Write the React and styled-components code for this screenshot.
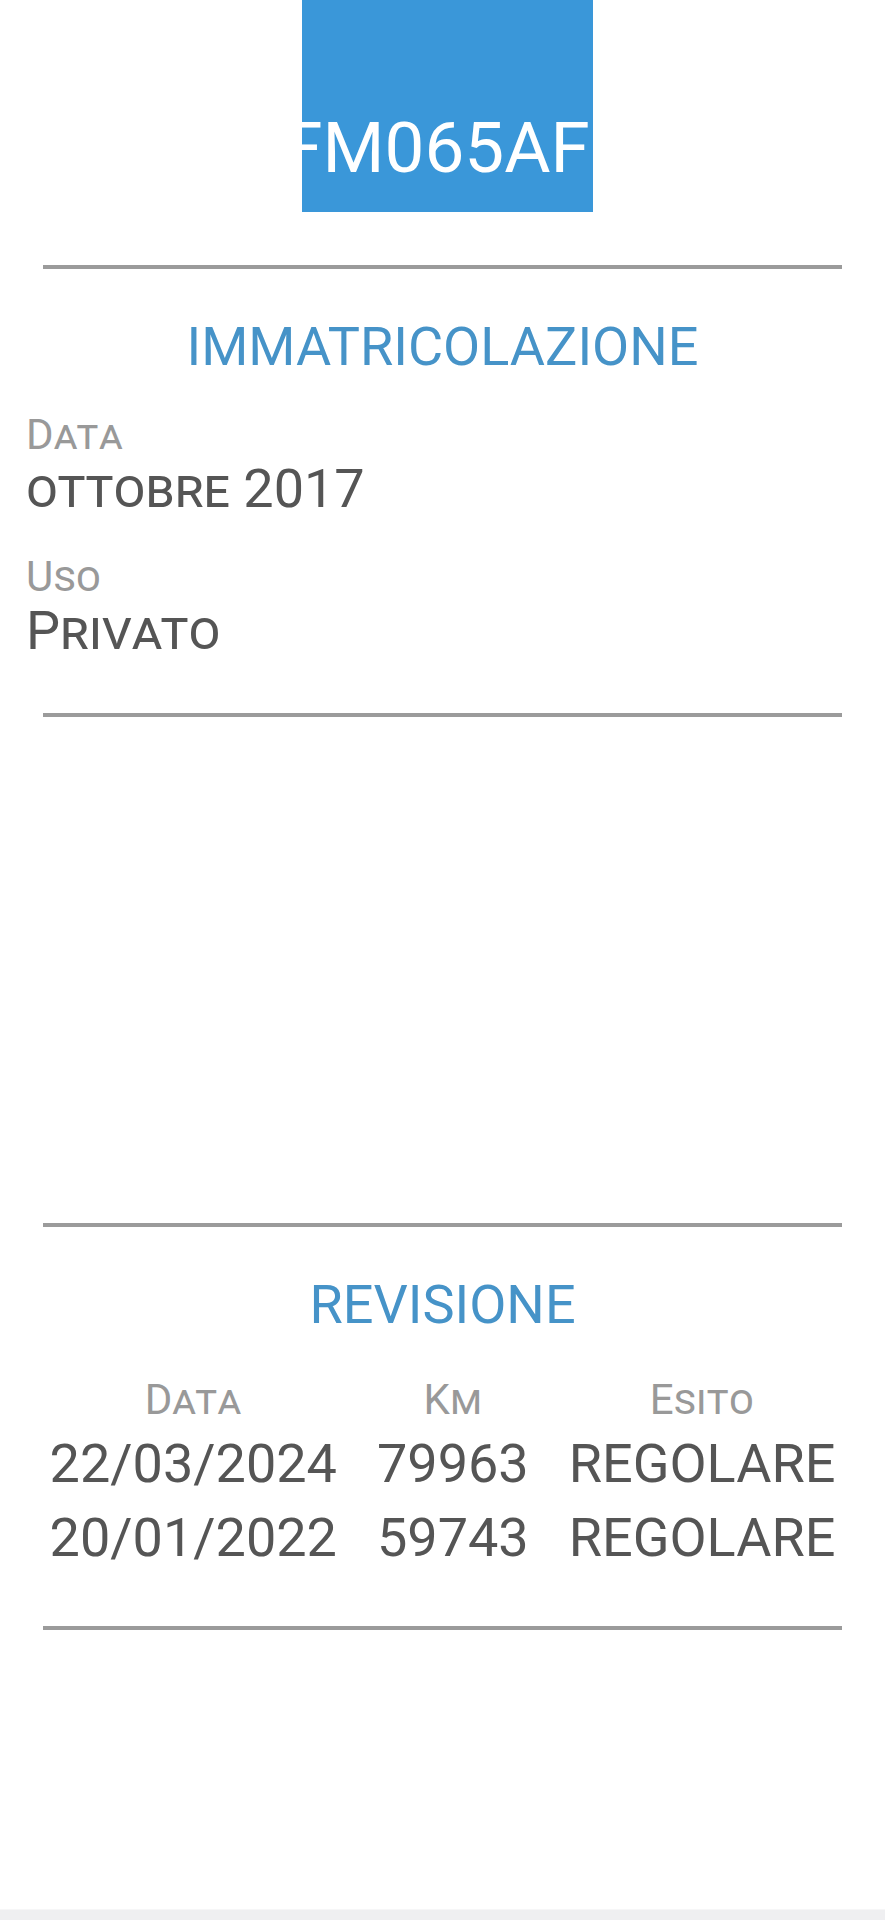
import { Fragment } from 'react';
import styled, { createGlobalStyle } from 'styled-components';

const GlobalStyle = createGlobalStyle`
  html, body {
    margin: 0;
    padding: 0;
    background: #fff;
  }
  body {
    font-family: Roboto, "Noto Sans", "Liberation Sans", sans-serif;
  }
`;

const Page = styled.div`
  min-height: 100vh;
  display: flex;
  flex-direction: column;
`;

const Header = styled.header`
  display: flex;
  justify-content: center;
  padding-left: 10px;
`;

const Plate = styled.div`
  width: 291px;
  height: 212px;
  box-sizing: border-box;
  padding-top: 112px;
  background: #3a97d9;
  display: flex;
  justify-content: center;
  align-items: flex-start;
`;

const PlateNumber = styled.span`
  color: #fff;
  font-size: 71px;
  line-height: 71px;
  white-space: nowrap;
  margin-right: 22px;
`;

const Divider = styled.hr`
  margin: ${(p) => p.$top}px 43px 0;
  border: 0;
  height: 4px;
  background: #9b9b9b;
`;

const SectionTitle = styled.h2`
  margin: 50px 0 0;
  text-align: center;
  font-size: 54px;
  line-height: 56px;
  font-weight: 400;
  color: #4693c8;
`;

const Field = styled.div`
  margin-top: 39px;
  padding-left: 26px;
`;

const Label = styled.div`
  font-size: 42px;
  line-height: 42px;
  color: #999;
  font-variant: small-caps;
  letter-spacing: 0.5px;
`;

const Value = styled.div`
  margin-top: 5px;
  font-size: 54px;
  line-height: 56px;
  color: #555;
  font-variant: small-caps;
`;

const EmptyBlock = styled.div`
  height: 506px;
`;

const Table = styled.div`
  display: grid;
  grid-template-columns: repeat(3, auto);
  justify-content: center;
  justify-items: center;
  column-gap: 40px;
  margin-top: 46px;
`;

const HeadCell = styled.div`
  font-size: 42px;
  line-height: 42px;
  color: #999;
  font-variant: small-caps;
  letter-spacing: 0.5px;
  padding-bottom: 15px;
`;

const Cell = styled.div`
  font-size: 54px;
  line-height: 56px;
  color: #555;
  padding-bottom: 18px;
`;

const BottomBar = styled.div`
  margin-top: auto;
  height: 10px;
  background: #efeff1;
  border-top: 1px solid #f6f6f7;
`;

const revisioni = [
  { data: '22/03/2024', km: '79963', esito: 'REGOLARE' },
  { data: '20/01/2022', km: '59743', esito: 'REGOLARE' },
];

const App = () => {
  return (
    <Page>
      <GlobalStyle />
      <Header>
        <Plate>
          <PlateNumber>FM065AF</PlateNumber>
        </Plate>
      </Header>

      <Divider $top={53} />
      <SectionTitle>IMMATRICOLAZIONE</SectionTitle>
      <Field>
        <Label>Data</Label>
        <Value>ottobre 2017</Value>
      </Field>
      <Field>
        <Label>Uso</Label>
        <Value>Privato</Value>
      </Field>
      <Divider $top={54} />

      <EmptyBlock />

      <Divider $top={0} />
      <SectionTitle>REVISIONE</SectionTitle>
      <Table>
        <HeadCell>Data</HeadCell>
        <HeadCell>Km</HeadCell>
        <HeadCell>Esito</HeadCell>
        {revisioni.map((r) => (
          <Fragment key={r.data}>
            <Cell>{r.data}</Cell>
            <Cell>{r.km}</Cell>
            <Cell>{r.esito}</Cell>
          </Fragment>
        ))}
      </Table>
      <Divider $top={42} />

      <BottomBar />
    </Page>
  );
};

export default App;
